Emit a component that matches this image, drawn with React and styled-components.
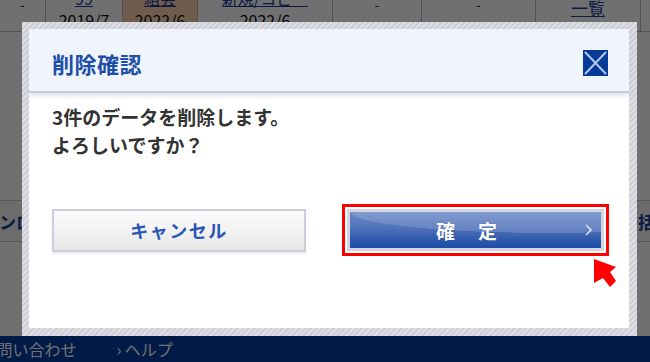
import React from "react"
import styled, { createGlobalStyle } from "styled-components"

const GlobalStyle = createGlobalStyle`
  html, body {
    margin: 0;
    padding: 0;
    overflow: hidden;
  }
  body {
    font-family: "Noto Sans CJK JP", "Noto Sans", sans-serif;
    background: #fff;
  }
`

const cells = [
  { w: 46, top: "", bottom: "" },
  { w: 77, top: "99", bottom: "2019/7" },
  { w: 75, top: "組会", bottom: "2022/6", warm: true },
  { w: 135, top: "新規/コピー", bottom: "2022/6" },
  { w: 89, top: "", bottom: "-" },
  { w: 114, top: "", bottom: "-" },
  { w: 105, top: "一覧", bottom: "", linkOnly: true },
  { w: 40, top: "", bottom: "" },
]

const App = () => (
  <>
    <GlobalStyle />
    <Page>
      <TableRow>
        {cells.map((c, i) => (
          <Cell key={i} $w={c.w} $warm={c.warm}>
            {c.linkOnly ? (
              <CellLink $big>{c.top}</CellLink>
            ) : (
              <>
                <CellLink>{c.top || "\u00a0"}</CellLink>
                <CellText>{c.bottom || "\u00a0"}</CellText>
              </>
            )}
          </Cell>
        ))}
      </TableRow>

      <ActionRow>
        <PageButton $offset={-36}>ダウンロード</PageButton>
        <PageButton $right>一括ダウンロード</PageButton>
      </ActionRow>

      <Footer>
        <FooterItem $first>› お問い合わせ</FooterItem>
        <FooterItem>› ヘルプ</FooterItem>
      </Footer>
    </Page>

    <Overlay>
      <Frame>
        <Dialog>
          <Header>
            <Title>削除確認</Title>
            <CloseButton aria-label="閉じる">
              <svg width="25" height="26" viewBox="0 0 25 26">
                <line x1="2" y1="2" x2="23" y2="24" stroke="#b4c6ea" strokeWidth="2" />
                <line x1="23" y1="2" x2="2" y2="24" stroke="#b4c6ea" strokeWidth="2" />
              </svg>
            </CloseButton>
          </Header>

          <Body>
            <Message>
              3件のデータを削除します。
              <br />
              よろしいですか？
            </Message>
          </Body>

          <Buttons>
            <CancelButton>キャンセル</CancelButton>
            <Highlight>
              <ConfirmButton>
                <span>確　定</span>
                <Chevron>
                  <svg width="8" height="12" viewBox="0 0 8 12">
                    <path d="M1 1 L6 6 L1 11" fill="none" stroke="#c8d6f2" strokeWidth="1.6" />
                    <path d="M3 3 L6 6 L3 9" fill="none" stroke="#ffffff" strokeWidth="1" opacity="0.6" />
                  </svg>
                </Chevron>
              </ConfirmButton>
            </Highlight>
          </Buttons>
        </Dialog>
      </Frame>

      <Cursor width="30" height="34" viewBox="0 0 30 34">
        <polygon points="6,4 28,12 22,17 28,26 22,32 15,23 6,28" fill="#ff0000" />
      </Cursor>
    </Overlay>
  </>
)

const Page = styled.div`
  position: relative;
  width: 650px;
  height: 362px;
  display: flex;
  flex-direction: column;
  overflow: hidden;
`

const TableRow = styled.div`
  display: flex;
  margin-top: -15px;
  height: 46px;
  border-bottom: 1px solid #b8b8c4;
`

const Cell = styled.div`
  flex: 0 0 ${(p) => p.$w}px;
  box-sizing: border-box;
  border-right: 1px solid #b8b8c4;
  background: ${(p) => (p.$warm ? "#ffd2ae" : "#fff")};
  display: flex;
  flex-direction: column;
  align-items: center;
  padding-top: 2px;
  font-size: 16px;
  line-height: 22px;
`

const CellLink = styled.span`
  color: #1b3c9e;
  text-decoration: underline;
  margin-top: ${(p) => (p.$big ? "10px" : "0")};
  font-size: ${(p) => (p.$big ? "17px" : "16px")};
`

const CellText = styled.span`
  color: #111;
`

const ActionRow = styled.div`
  display: flex;
  margin-top: 168px;
  height: 42px;
`

const PageButton = styled.div`
  box-sizing: border-box;
  flex: 0 0 auto;
  height: 42px;
  display: flex;
  align-items: center;
  border: 1px solid #c8c8d0;
  background: #f6f6f6;
  color: #1b3c9e;
  font-weight: 700;
  font-size: 17px;
  white-space: nowrap;
  margin-left: ${(p) => (p.$right ? "auto" : `${p.$offset}px`)};
  margin-right: ${(p) => (p.$right ? "-229px" : "0")};
  width: ${(p) => (p.$right ? "260px" : "auto")};
  padding: ${(p) => (p.$right ? "0 0 0 1px" : "0 20px 0 0")};
`

const Footer = styled.div`
  margin-top: auto;
  height: 26px;
  background: #003ea3;
  display: flex;
  align-items: center;
  gap: 40px;
`

const FooterItem = styled.span`
  color: #fff;
  font-size: 16px;
  white-space: nowrap;
  margin-left: ${(p) => (p.$first ? "-28px" : "0")};
`

const Overlay = styled.div`
  position: fixed;
  inset: 0;
  background: rgba(0, 0, 0, 0.56);
  padding: 22px 0 0 22px;
`

const Frame = styled.div`
  box-sizing: border-box;
  width: 615px;
  height: 314px;
  padding: 7px 8px 8px 7px;
  background: repeating-linear-gradient(
    135deg,
    #cfcfd8 0px,
    #cfcfd8 2px,
    #dedee4 2px,
    #dedee4 4px
  );
`

const Dialog = styled.div`
  height: 100%;
  background: #fff;
  display: flex;
  flex-direction: column;
`

const Header = styled.div`
  box-sizing: border-box;
  height: 64px;
  padding: 5px 21px 0 23px;
  display: flex;
  align-items: center;
  justify-content: space-between;
  background: #eff4fd;
  border-bottom: 2px solid #c4cadc;
  box-shadow: 0 3px 4px rgba(175, 185, 212, 0.35);
`

const Title = styled.h1`
  margin: 0;
  font-size: 22px;
  font-weight: 700;
  color: #1e4ea6;
  letter-spacing: 0.5px;
`

const CloseButton = styled.button`
  width: 25px;
  height: 26px;
  padding: 0;
  border: none;
  background: #053a98;
  display: flex;
  cursor: pointer;
`

const Body = styled.div`
  padding: 10px 23px 0;
`

const Message = styled.p`
  margin: 0;
  font-size: 19px;
  line-height: 28px;
  font-weight: 700;
  color: #333;
`

const Buttons = styled.div`
  margin-top: 45px;
  padding: 0 20px 0 23px;
  display: flex;
  align-items: center;
  justify-content: space-between;
`

const CancelButton = styled.button`
  box-sizing: border-box;
  width: 254px;
  height: 43px;
  border: 2px solid #cdcedd;
  background: linear-gradient(180deg, #fcfcfc 0%, #f1f1f1 55%, #e6e6e6 100%);
  box-shadow: 0 2px 2px rgba(190, 190, 210, 0.35);
  color: #2a56b4;
  font-family: inherit;
  font-size: 18px;
  font-weight: 700;
  letter-spacing: 1.5px;
  cursor: pointer;
`

const Highlight = styled.div`
  border: 3px solid #ff0000;
  padding: 2px;
  background: #fff;
  display: flex;
`

const ConfirmButton = styled.button`
  position: relative;
  box-sizing: border-box;
  width: 257px;
  height: 42px;
  border: 3px solid #d3d6de;
  padding: 0 16px 0 0;
  background:
    radial-gradient(ellipse 200px 21px at 200px 0, rgba(255, 255, 255, 0.14) 99%, transparent 100%),
    linear-gradient(180deg, #6a8ac7 0%, #5172b9 45%, #2f5aae 75%, #1f4ca7 100%);
  color: #fff;
  font-family: inherit;
  font-size: 19px;
  font-weight: 700;
  letter-spacing: 2px;
  text-shadow: 0 0 1px rgba(0, 0, 0, 0.3);
  cursor: pointer;
`

const Chevron = styled.span`
  position: absolute;
  right: 8px;
  top: 50%;
  transform: translateY(-50%);
  display: flex;
`

const Cursor = styled.svg`
  position: absolute;
  left: 588px;
  top: 255px;
`

export default App
